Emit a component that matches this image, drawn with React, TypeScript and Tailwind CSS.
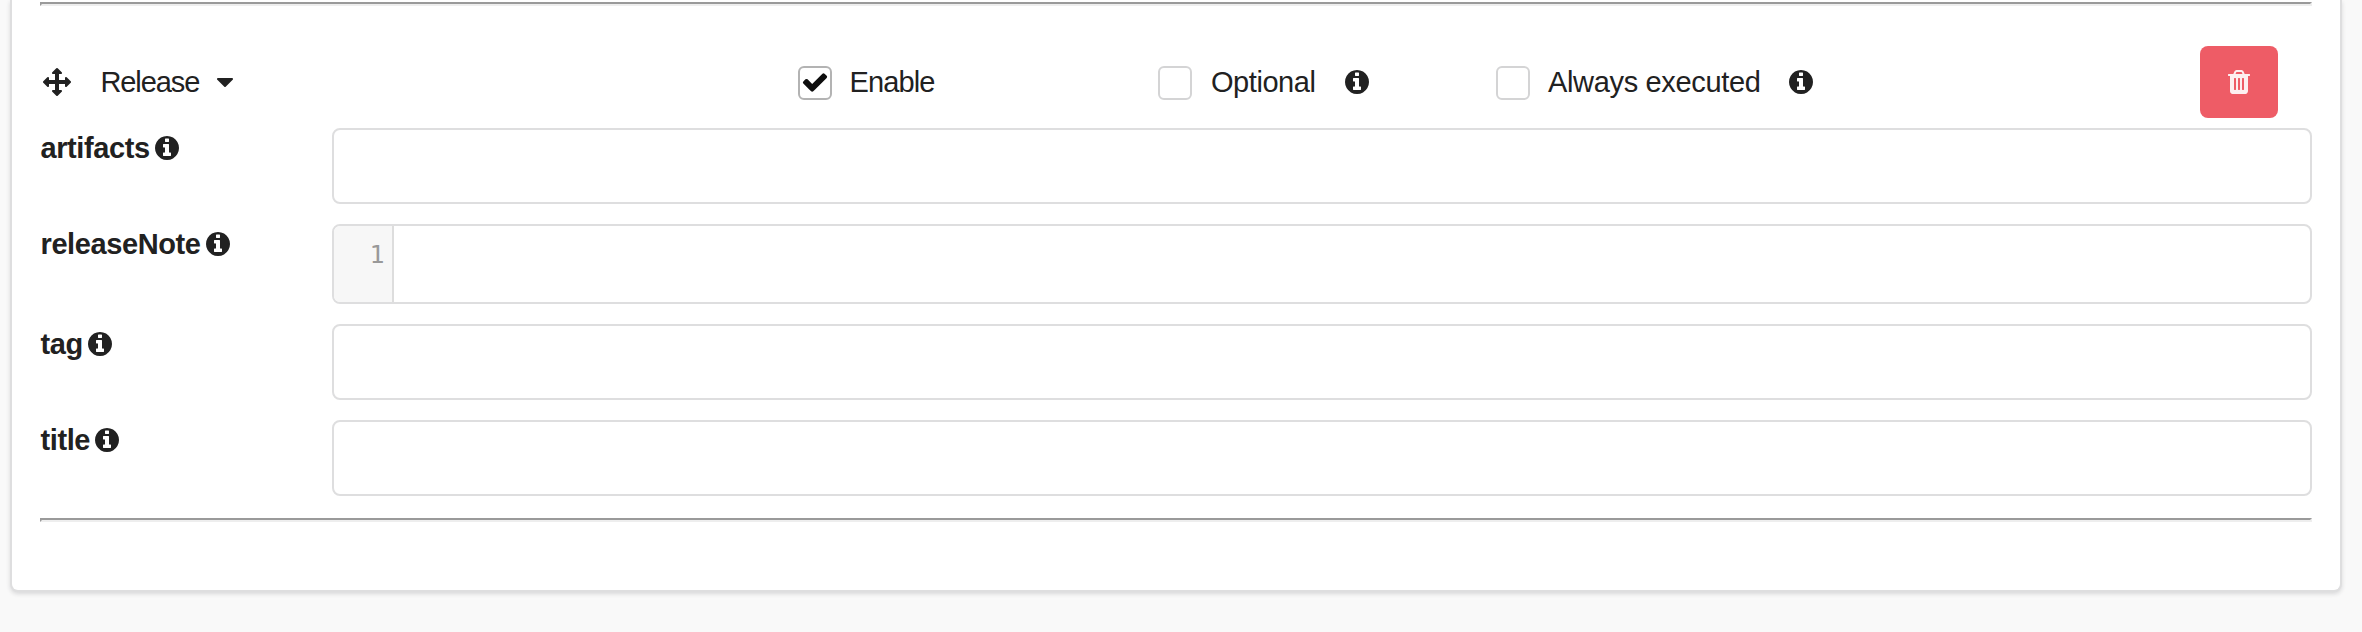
import React from "react";

const PATHS = {
  arrows:
    "M1792 896q0 26-19 45l-256 256q-19 19-45 19t-45-19-19-45v-128h-384v384h128q26 0 45 19t19 45-19 45l-256 256q-19 19-45 19t-45-19l-256-256q-19-19-19-45t19-45 45-19h128v-384h-384v128q0 26-19 45t-45 19-45-19l-256-256q-19-19-19-45t19-45l256-256q19-19 45-19t45 19 19 45v128h384v-384h-128q-26 0-45-19t-19-45 19-45l256-256q19-19 45-19t45 19l256 256q19 19 19 45t-19 45-45 19h-128v384h384v-128q0-26 19-45t45-19 45 19l256 256q19 19 19 45z",
  caret:
    "M1408 704q0 26-19 45l-448 448q-19 19-45 19t-45-19l-448-448q-19-19-19-45t19-45 45-19h896q26 0 45 19t19 45z",
  check:
    "M1671 566q0 40-28 68l-724 724-136 136q-28 28-68 28t-68-28l-136-136-362-362q-28-28-28-68t28-68l136-136q28-28 68-28t68 28l294 295 656-657q28-28 68-28t68 28l136 136q28 28 28 68z",
  info:
    "M1152 1376v-160q0-14-9-23t-23-9h-96v-512q0-14-9-23t-23-9h-320q-14 0-23 9t-9 23v160q0 14 9 23t23 9h96v320h-96q-14 0-23 9t-9 23v160q0 14 9 23t23 9h448q14 0 23-9t9-23zm-128-896v-160q0-14-9-23t-23-9h-192q-14 0-23 9t-9 23v160q0 14 9 23t23 9h192q14 0 23-9t9-23zm640 416q0 209-103 385.5t-279.5 279.5-385.5 103-385.5-103-279.5-279.5-103-385.5 103-385.5 279.5-279.5 385.5-103 385.5 103 279.5 279.5 103 385.5z",
  trash:
    "M704 1376v-704q0-14-9-23t-23-9h-64q-14 0-23 9t-9 23v704q0 14 9 23t23 9h64q14 0 23-9t9-23zm256 0v-704q0-14-9-23t-23-9h-64q-14 0-23 9t-9 23v704q0 14 9 23t23 9h64q14 0 23-9t9-23zm256 0v-704q0-14-9-23t-23-9h-64q-14 0-23 9t-9 23v704q0 14 9 23t23 9h64q14 0 23-9t9-23zm-544-992h448l-48-117q-7-9-17-11h-317q-10 2-17 11zm928 32v64q0 14-9 23t-23 9h-96v948q0 83-47 143.5t-113 60.5h-832q-66 0-113-58.5t-47-141.5v-952h-96q-14 0-23-9t-9-23v-64q0-14 9-23t23-9h309l70-167q15-37 54-63t79-26h320q40 0 79 26t54 63l70 167h309q14 0 23 9t9 23z",
};

function Icon({ name, className = "" }: { name: keyof typeof PATHS; className?: string }) {
  return (
    <svg viewBox="0 0 1792 1792" fill="currentColor" className={`size-7 shrink-0 ${className}`}>
      <path d={PATHS[name]} />
    </svg>
  );
}

function Rule() {
  return (
    <div className="h-1 border-2 border-t-[#9a9a9a] border-r-[#eeeeee] border-b-[#eeeeee] border-l-[#9a9a9a]" />
  );
}

function Toggle({
  label,
  checked = false,
  hint = false,
  className,
  labelClassName = "",
  hintClassName = "",
}: {
  label: string;
  checked?: boolean;
  hint?: boolean;
  className: string;
  labelClassName?: string;
  hintClassName?: string;
}) {
  return (
    <div className={`flex shrink-0 items-center ${className}`}>
      <span
        role="checkbox"
        aria-checked={checked}
        className={`mt-0.5 flex size-[34px] shrink-0 items-center justify-center rounded-md border-2 bg-white ${
          checked ? "border-[#b3b3b3]" : "border-[#d4d4d5]"
        }`}
      >
        {checked && <Icon name="check" className="mr-px mb-[3px] text-[#0d0d0d]" />}
      </span>
      <span className={`whitespace-nowrap ${labelClassName}`}>{label}</span>
      {hint && <Icon name="info" className={hintClassName} />}
    </div>
  );
}

function Field({ label, code = false }: { label: string; code?: boolean }) {
  return (
    <div className="flex">
      <div className="flex h-10 w-[292px] shrink-0 items-center pl-[0.5px] font-bold tracking-[-0.4px]">
        <span>{label}</span>
        <Icon name="info" className="ml-[3px]" />
      </div>
      {code ? (
        <div className="flex h-20 grow overflow-hidden rounded-lg border-2 border-[#dededf] bg-white">
          <div className="w-[60px] border-r-2 border-[#dddddd] bg-[#f7f7f7] pt-[15px] pr-[7.5px] text-right font-['DejaVu_Sans_Mono',monospace] text-[25px] leading-7 tracking-normal text-[#999999]">
            1
          </div>
        </div>
      ) : (
        <div className="h-[76px] grow rounded-lg border-2 border-[#dededf] bg-white" />
      )}
    </div>
  );
}

export default function App() {
  return (
    <div className="h-[632px] overflow-hidden bg-[#f9f9f9] pr-5 pl-2.5 font-['Liberation_Sans',Arial,sans-serif] text-[29px] leading-10 text-[#212121]">
      <div className="h-[592px] rounded-b-lg border-2 border-t-0 border-[#dededf] bg-white px-7 pt-0.5 shadow-[0_2px_4px_0_rgba(34,36,38,0.15)]">
        <Rule />
        <div className="mt-10 flex h-[72px] items-center">
          <div className="flex w-[758px] shrink-0 items-center">
            <Icon name="arrows" className="ml-[2.5px]" />
            <span className="ml-[30px] w-[101px] tracking-[-1.1px]">Release</span>
            <Icon name="caret" className="ml-[9px]" />
          </div>
          <Toggle label="Enable" checked className="w-[360px]" labelClassName="ml-[17.5px] tracking-[-0.9px]" />
          <Toggle
            label="Optional"
            hint
            className="w-[338px]"
            labelClassName="ml-[19px] w-[106px] tracking-[-0.45px]"
            hintClassName="ml-[26px]"
          />
          <Toggle
            label="Always executed"
            hint
            className="grow"
            labelClassName="ml-[18px] w-[213px] tracking-[-0.34px]"
            hintClassName="ml-[25.5px]"
          />
          <button className="mr-[34px] flex h-[72px] w-[78px] shrink-0 items-center justify-center rounded-lg bg-[#ee5c66] text-white/90">
            <Icon name="trash" />
          </button>
        </div>
        <div className="mt-2.5 mb-[22px] flex flex-col gap-5">
          <Field label="artifacts" />
          <Field label="releaseNote" code />
          <Field label="tag" />
          <Field label="title" />
        </div>
        <Rule />
      </div>
    </div>
  );
}
